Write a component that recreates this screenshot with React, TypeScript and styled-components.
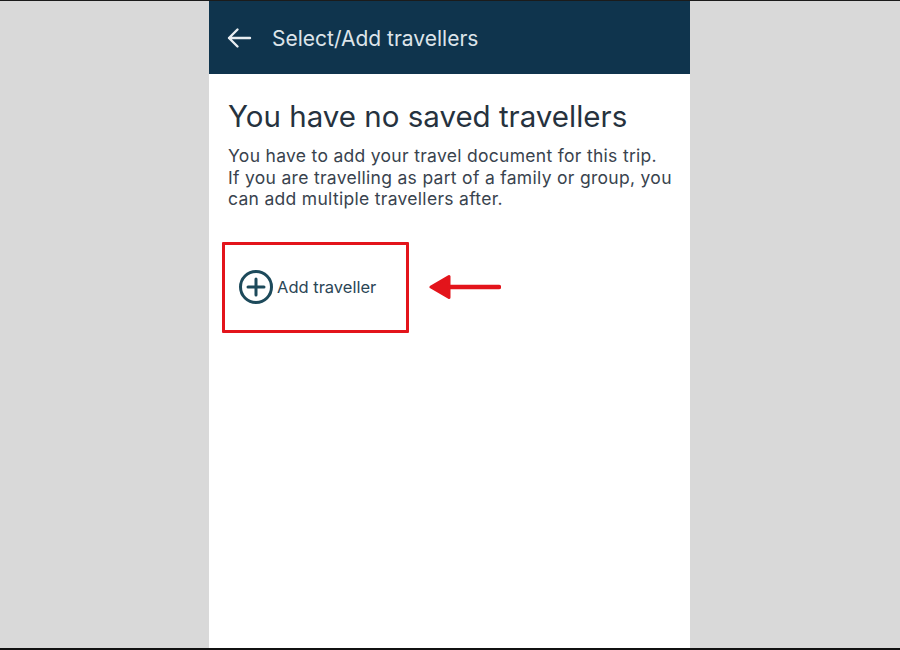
import React from "react";
import styled, { createGlobalStyle } from "styled-components";

const Global = createGlobalStyle`
  html, body { margin: 0; padding: 0; }
  body { background: #d9d9d9; font-family: Inter, "Open Sans", Arial, sans-serif; }
`;

const Frame = styled.div`
  width: 900px;
  height: 650px;
  box-sizing: border-box;
  border-top: 1px solid #1b1b1b;
  border-bottom: 2px solid #111;
  background: #d9d9d9;
  display: flex;
  justify-content: center;
  overflow: hidden;
`;

const Phone = styled.div`
  width: 481px;
  margin-left: -1px;
  background: #ffffff;
  display: flex;
  flex-direction: column;
`;

const Header = styled.header`
  height: 73px;
  background: #0f344d;
  display: flex;
  align-items: center;
  padding-left: 17px;
  gap: 20px;
  flex-shrink: 0;
`;

const Title = styled.h1`
  margin: 0;
  font-family: Inter, "Open Sans", Arial, sans-serif;
  font-weight: 400;
  font-size: 21px;
  color: #dde4ea;
  position: relative;
  top: 1px;
`;

const Content = styled.main`
  padding: 24px 12px 0 19px;
  display: flex;
  flex-direction: column;
`;

const Heading = styled.h2`
  margin: 0;
  font-family: Inter, "Open Sans", Arial, sans-serif;
  font-weight: 400;
  font-size: 29.5px;
  line-height: 36px;
  color: #26323e;
`;

const Body = styled.p`
  margin: 11px 0 0;
  font-family: Inter, "Open Sans", Arial, sans-serif;
  font-size: 17.5px;
  line-height: 21.5px;
  letter-spacing: 0.3px;
  color: #39434e;
  white-space: nowrap;
`;

const ActionRow = styled.div`
  margin-top: 32px;
  margin-left: -6px;
  display: flex;
  align-items: center;
  gap: 20px;
`;

const Highlight = styled.div`
  width: 187px;
  height: 91px;
  box-sizing: border-box;
  border: 3px solid #e3141b;
  border-radius: 1px;
  display: flex;
  align-items: center;
  padding-left: 13px;
`;

const AddButton = styled.button`
  border: none;
  background: none;
  padding: 0;
  display: flex;
  align-items: center;
  gap: 3px;
  cursor: pointer;
  font-family: Inter, "Open Sans", Arial, sans-serif;
  font-size: 16.5px;
  color: #2b4656;
`;

export default function App() {
  return (
    <>
      <Global />
      <Frame>
        <Phone>
          <Header>
            <svg width="26" height="22" viewBox="0 0 26 22" fill="none">
              <path d="M24 11H3M11.5 2.5L3 11l8.5 8.5" stroke="#e8edf1" strokeWidth="2.4" strokeLinecap="round" strokeLinejoin="round" />
            </svg>
            <Title>Select/Add travellers</Title>
          </Header>
          <Content>
            <Heading>You have no saved travellers</Heading>
            <Body>
              You have to add your travel document for this trip.
              <br />
              If you are travelling as part of a family or group, you
              <br />
              can add multiple travellers after.
            </Body>
            <ActionRow>
              <Highlight>
                <AddButton>
                  <svg width="36" height="36" viewBox="0 0 36 36" fill="none">
                    <circle cx="18" cy="18" r="15.5" stroke="#1d4a5b" strokeWidth="3" />
                    <path d="M18 10v16M10 18h16" stroke="#1d4a5b" strokeWidth="3" strokeLinecap="round" />
                  </svg>
                  Add traveller
                </AddButton>
              </Highlight>
              <svg width="72" height="28" viewBox="0 0 72 28">
                <path d="M70 14H18" stroke="#e3141b" strokeWidth="4.5" strokeLinecap="round" />
                <path d="M2 14L20 3.5V24.5Z" fill="#e3141b" stroke="#e3141b" strokeWidth="3" strokeLinejoin="round" />
              </svg>
            </ActionRow>
          </Content>
        </Phone>
      </Frame>
    </>
  );
}
